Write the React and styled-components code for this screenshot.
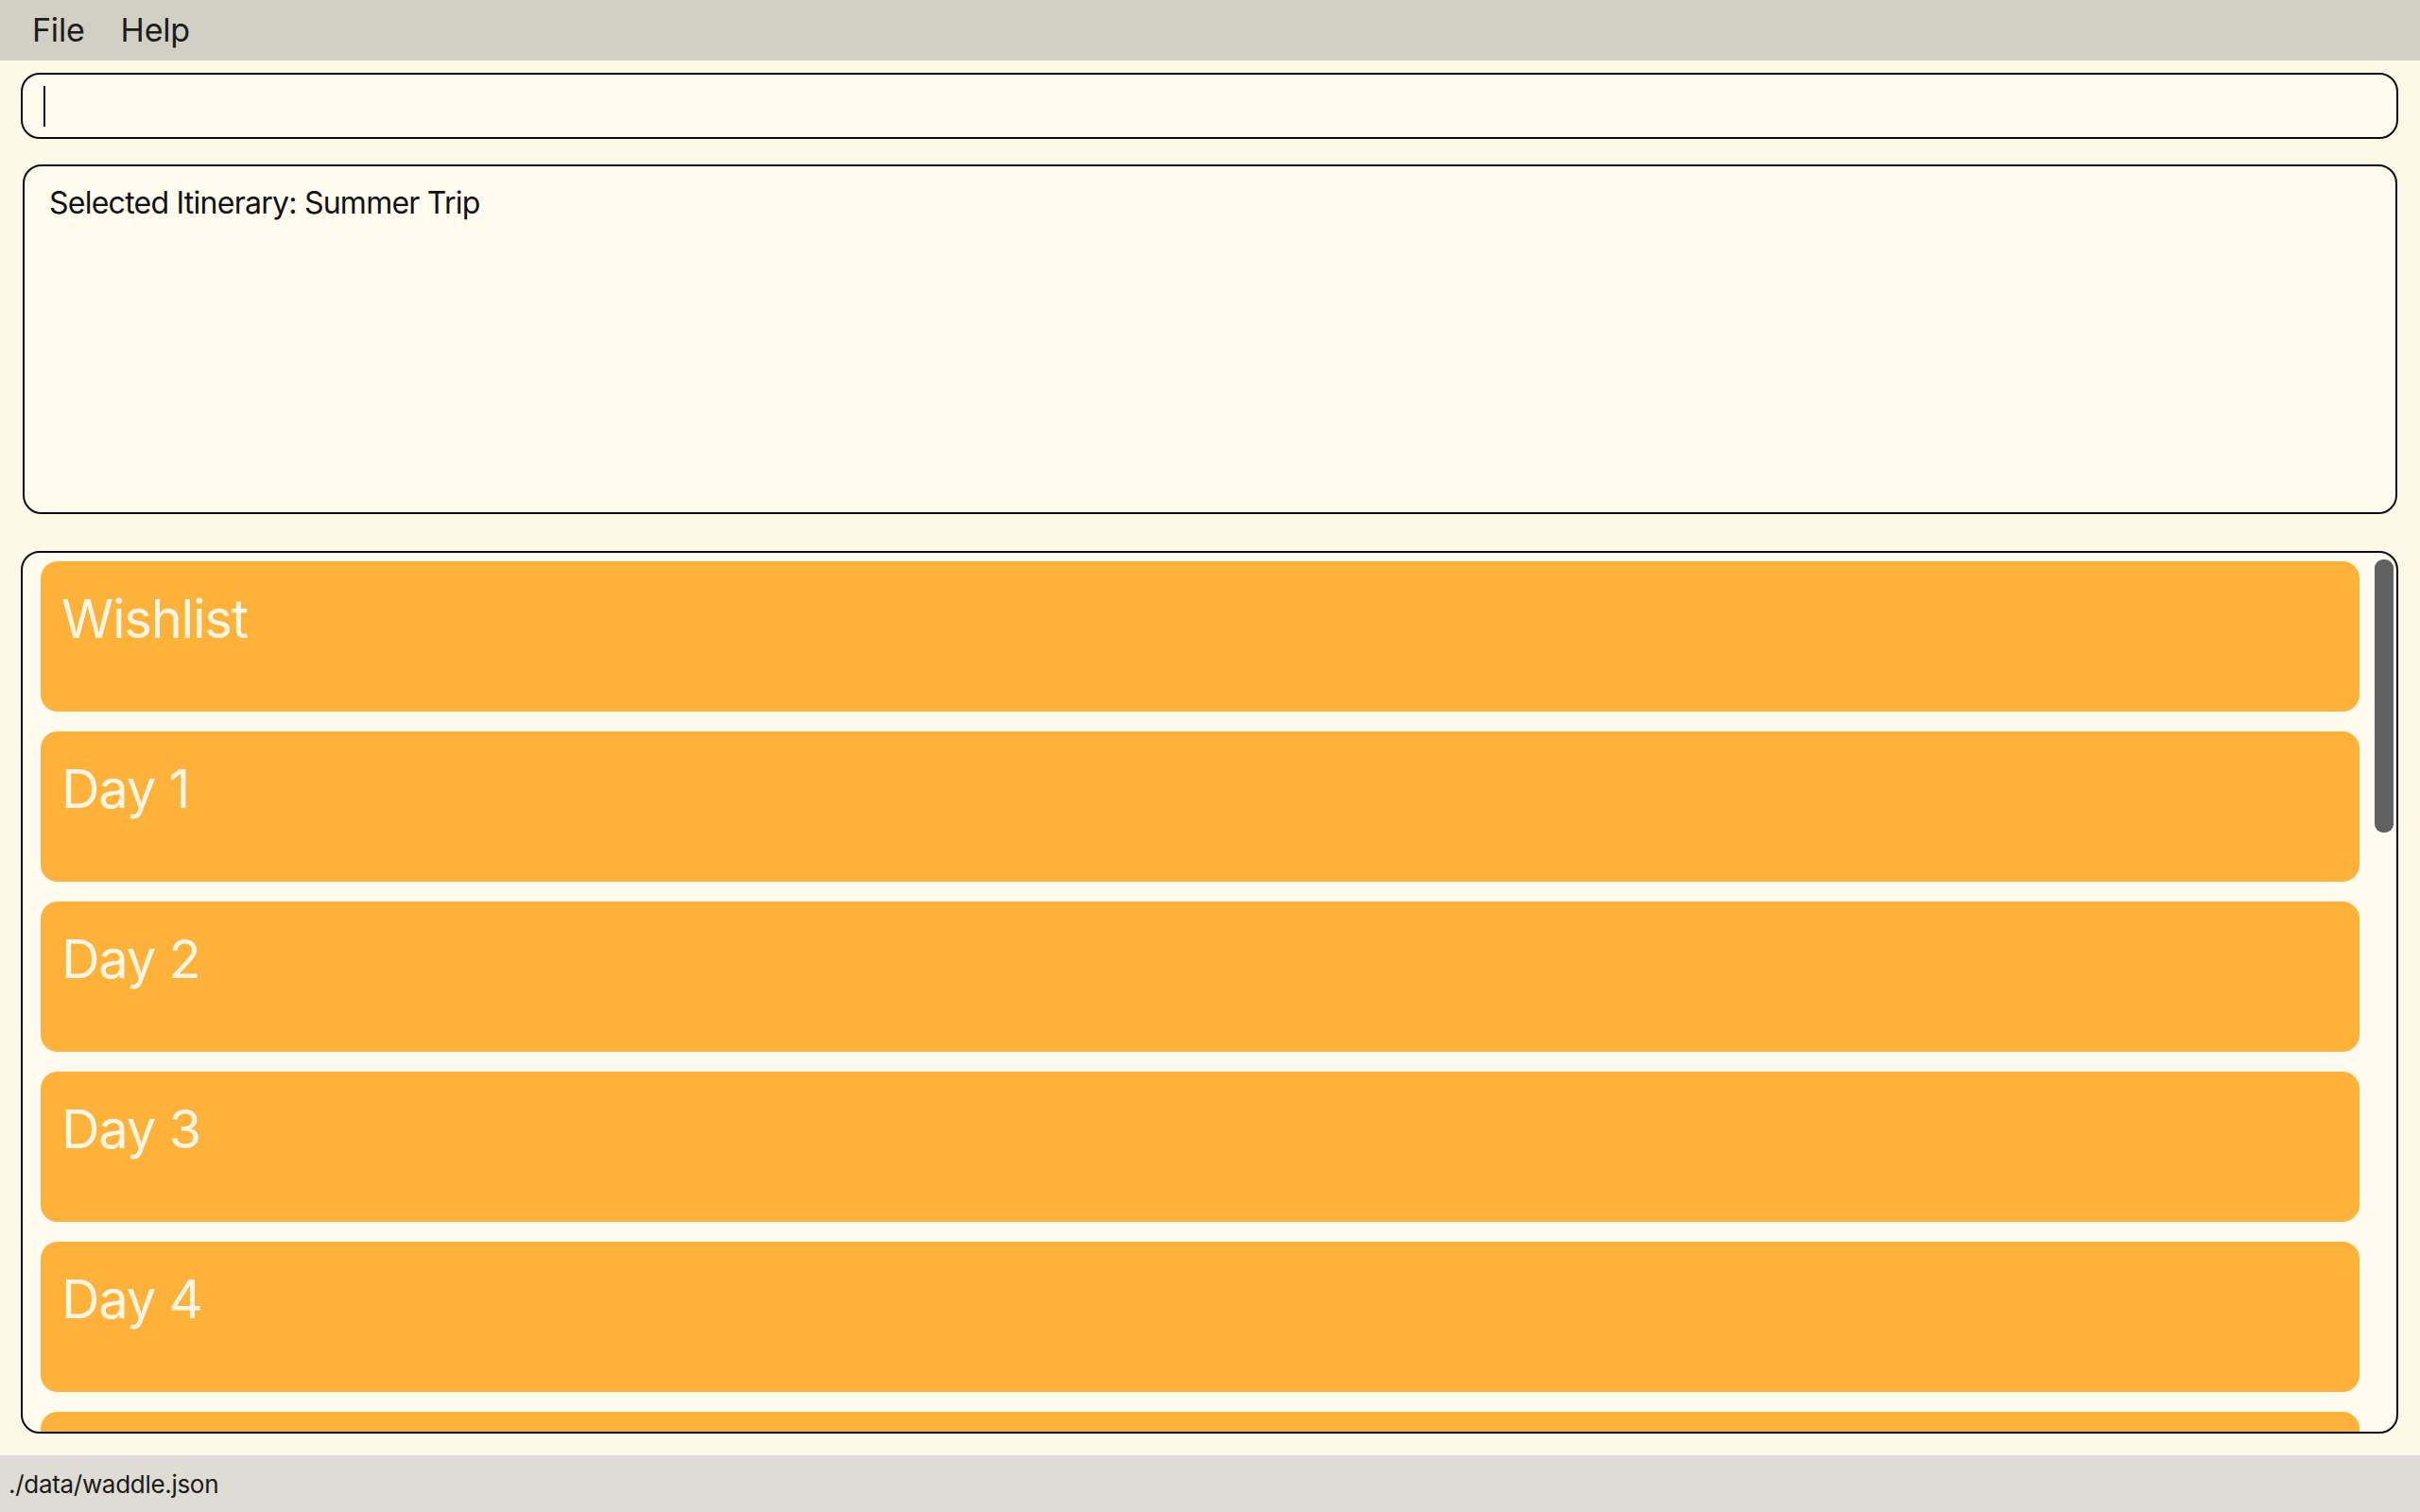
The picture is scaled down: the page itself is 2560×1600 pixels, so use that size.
import React from "react";
import styled, { createGlobalStyle } from "styled-components";

const Global = createGlobalStyle`
  html, body { margin: 0; padding: 0; }
  body {
    background: #fdf8e8;
    font-family: Inter, "Noto Sans", "Liberation Sans", sans-serif;
    color: #111;
  }
  #root { height: 100vh; }
`;

const Window = styled.div`
  display: flex;
  flex-direction: column;
  height: 100vh;
  width: 100vw;
  overflow: hidden;
  background: #fdf8e8;
`;

const MenuBar = styled.div`
  display: flex;
  align-items: center;
  gap: 38px;
  height: 64px;
  flex: 0 0 64px;
  padding-left: 34px;
  padding-bottom: 2px;
  box-sizing: border-box;
  background: #d2cfc4;
`;

const MenuItem = styled.span`
  font-size: 34px;
  color: #1c1c1c;
  letter-spacing: -0.2px;
`;

const Main = styled.div`
  flex: 1;
  display: flex;
  flex-direction: column;
  padding: 13px 23px 23px 22px;
  min-height: 0;
`;

const Panel = styled.div`
  box-sizing: border-box;
  border: 2px solid #0c0c0c;
  border-radius: 20px;
  background: #fffcef;
`;

const CommandBox = styled(Panel)`
  height: 70px;
  flex: 0 0 70px;
  display: flex;
  align-items: center;
  padding-left: 22px;
`;

const Caret = styled.div`
  width: 2px;
  height: 43px;
  background: #111;
`;

const ResultBox = styled(Panel)`
  margin: 27px 1px 0 2px;
  height: 370px;
  flex: 0 0 370px;
  padding: 19px 26px;
`;

const ResultText = styled.div`
  font-size: 32px;
  letter-spacing: -0.75px;
  color: #111;
`;

const ListPanel = styled(Panel)`
  margin-top: 39px;
  flex: 1;
  min-height: 0;
  display: flex;
  overflow: hidden;
`;

const CardColumn = styled.div`
  flex: 1;
  display: flex;
  flex-direction: column;
  gap: 21px;
  padding: 9px 0 0 19px;
  overflow: hidden;
`;

const Card = styled.div`
  flex: 0 0 159px;
  height: 159px;
  box-sizing: border-box;
  border-radius: 18px;
  background: #ffb23a;
  padding: 27px 22px;
`;

const CardTitle = styled.div`
  font-size: 56px;
  letter-spacing: -1.2px;
  color: #fff6e6;
`;

const ScrollTrack = styled.div`
  flex: 0 0 20px;
  margin: 7px 3px 0 16px;
`;

const ScrollThumb = styled.div`
  height: 289px;
  border-radius: 9px;
  background: #616161;
`;

const StatusBar = styled.div`
  flex: 0 0 60px;
  height: 60px;
  display: flex;
  align-items: center;
  padding-left: 9px;
  background: #dedcd4;
  font-size: 26px;
  letter-spacing: -0.3px;
  color: #1a1a1a;
`;

const cards = ["Wishlist", "Day 1", "Day 2", "Day 3", "Day 4"];

export default function App() {
  return (
    <>
      <Global />
      <Window>
        <MenuBar>
          <MenuItem>File</MenuItem>
          <MenuItem>Help</MenuItem>
        </MenuBar>
        <Main>
          <CommandBox>
            <Caret />
          </CommandBox>
          <ResultBox>
            <ResultText>Selected Itinerary: Summer Trip</ResultText>
          </ResultBox>
          <ListPanel>
            <CardColumn>
              {cards.map((c) => (
                <Card key={c}>
                  <CardTitle>{c}</CardTitle>
                </Card>
              ))}
              <Card aria-label="Day 5" />
            </CardColumn>
            <ScrollTrack>
              <ScrollThumb />
            </ScrollTrack>
          </ListPanel>
        </Main>
        <StatusBar>./data/waddle.json</StatusBar>
      </Window>
    </>
  );
}
